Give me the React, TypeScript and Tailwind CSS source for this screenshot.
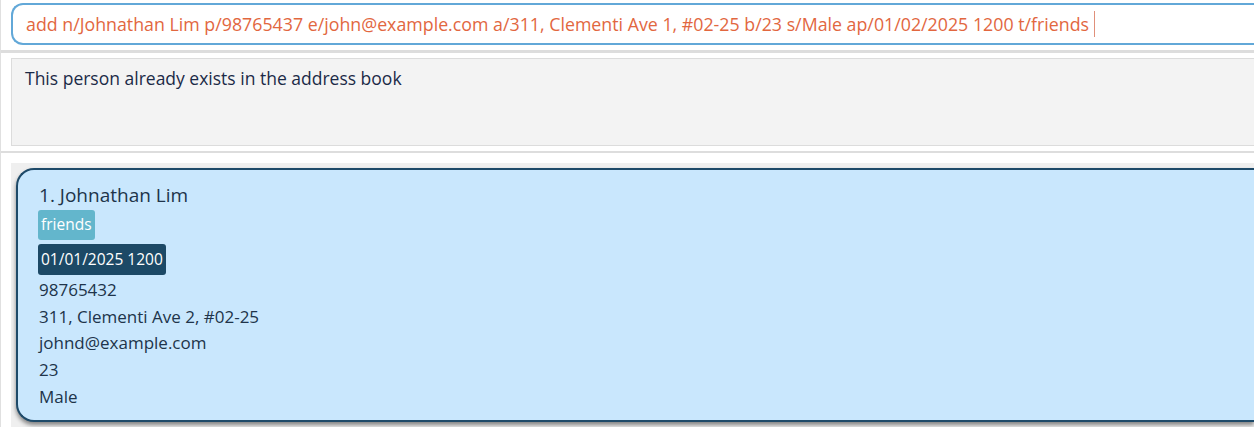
const commandText =
  "add n/Johnathan Lim p/98765437 e/john@example.com a/311, Clementi Ave 1, #02-25 b/23 s/Male ap/01/02/2025 1200 t/friends";

const person = {
  index: 1,
  name: "Johnathan Lim",
  tags: ["friends"],
  appointment: "01/01/2025 1200",
  phone: "98765432",
  address: "311, Clementi Ave 2, #02-25",
  email: "johnd@example.com",
  age: "23",
  gender: "Male",
};

const font = { fontFamily: '"Open Sans", "Noto Sans", sans-serif' };

function CommandBox() {
  return (
    <div className="pt-[3px] pl-[10px] pb-[5px] border-b-[3px] border-[#dddddd]">
      <div className="h-[42px] flex items-center pl-[13px] bg-white border-2 border-r-0 border-[#62a8d8] rounded-l-[12px]">
        <span className="text-[17.8px] text-[#e2673f] whitespace-nowrap">{commandText}</span>
        <span className="ml-[5px] w-px h-[26px] bg-[#e0907a]" />
      </div>
    </div>
  );
}

function ResultBox() {
  return (
    <div className="pt-[5px] pl-[10px] pb-[5px] border-b-2 border-[#dddddd]">
      <div className="h-[88px] bg-[#f3f3f3] border border-r-0 border-[#dcdcdc] pl-[13px] pt-[6px]">
        <p className="text-[17.5px] text-[#1b2a47]">This person already exists in the address book</p>
      </div>
    </div>
  );
}

function PersonCard() {
  return (
    <div className="h-[254px] bg-[#c9e7fd] border-2 border-r-0 border-[#1e4a69] rounded-l-[18px] shadow-[0_3px_4px_rgba(0,0,0,0.45)] pl-[20px] pt-[12px] text-[#20344a]">
      <p className="text-[19px] leading-[26px] ml-px">
        {person.index}. {person.name}
      </p>
      <div className="flex gap-1 mt-[2px]">
        {person.tags.map((t) => (
          <span key={t} className="h-[30px] px-[3px] flex items-center rounded-[3px] bg-[#63b6cc] text-white text-[15.5px]">
            {t}
          </span>
        ))}
      </div>
      <div className="flex mt-[4px]">
        <span className="h-[31px] px-[3px] flex items-center rounded-[3px] bg-[#1c4966] text-white text-[15.5px]">
          {person.appointment}
        </span>
      </div>
      <div className="mt-[2px] text-[17px] leading-[26.7px] ml-px">
        <p>{person.phone}</p>
        <p>{person.address}</p>
        <p>{person.email}</p>
        <p>{person.age}</p>
        <p>{person.gender}</p>
      </div>
    </div>
  );
}

export default function App() {
  return (
    <div className="w-[1254px] h-[427px] overflow-hidden bg-white border-l border-[#e0e0e0]" style={font}>
      <CommandBox />
      <ResultBox />
      <div className="pt-[10px] pl-[10px]">
        <div className="bg-[#efefef] pt-[5px] pl-[5px] h-[280px]">
          <PersonCard />
        </div>
      </div>
    </div>
  );
}
